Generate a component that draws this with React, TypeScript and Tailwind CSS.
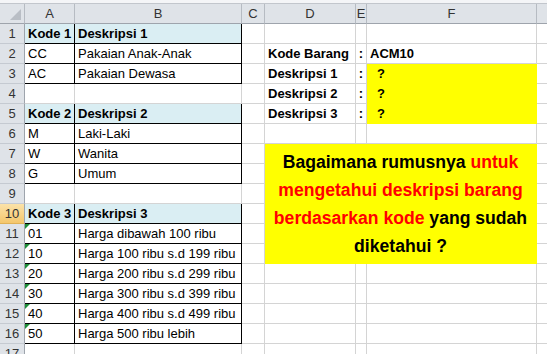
import type { ReactNode } from "react";

type TableKind = "head" | "body" | "blank";

type SheetRow = {
  n: number;
  kind: TableKind;
  a?: string;
  b?: string;
  textNumber?: boolean;
  label?: string;
  value?: string;
  ask?: boolean;
};

const rows: SheetRow[] = [
  { n: 1, kind: "head", a: "Kode 1", b: "Deskripsi 1" },
  { n: 2, kind: "body", a: "CC", b: "Pakaian Anak-Anak", label: "Kode Barang", value: "ACM10" },
  { n: 3, kind: "body", a: "AC", b: "Pakaian Dewasa", label: "Deskripsi 1", ask: true },
  { n: 4, kind: "blank", label: "Deskripsi 2", ask: true },
  { n: 5, kind: "head", a: "Kode 2", b: "Deskripsi 2", label: "Deskripsi 3", ask: true },
  { n: 6, kind: "body", a: "M", b: "Laki-Laki" },
  { n: 7, kind: "body", a: "W", b: "Wanita" },
  { n: 8, kind: "body", a: "G", b: "Umum" },
  { n: 9, kind: "blank" },
  { n: 10, kind: "head", a: "Kode 3", b: "Deskripsi 3" },
  { n: 11, kind: "body", a: "01", b: "Harga dibawah 100 ribu", textNumber: true },
  { n: 12, kind: "body", a: "10", b: "Harga 100 ribu s.d 199 ribu", textNumber: true },
  { n: 13, kind: "body", a: "20", b: "Harga 200 ribu s.d 299 ribu", textNumber: true },
  { n: 14, kind: "body", a: "30", b: "Harga 300 ribu s.d 399 ribu", textNumber: true },
  { n: 15, kind: "body", a: "40", b: "Harga 400 ribu s.d 499 ribu", textNumber: true },
  { n: 16, kind: "body", a: "50", b: "Harga 500 ribu lebih", textNumber: true },
  { n: 17, kind: "blank" },
];

// rows 7..12 of D:F sit under the merged question cell
const mergedFrom = 7;
const mergedTo = 12;

function Cell({ children, className = "" }: { children?: ReactNode; className?: string }) {
  return (
    <div
      className={
        "relative flex items-end overflow-hidden whitespace-nowrap border-r border-b px-[3px] pb-[1px] text-[13px] leading-[17px] text-black " +
        className
      }
    >
      {children}
    </div>
  );
}

function ColHeader({ label, className = "" }: { label: string; className?: string }) {
  return (
    <div
      className={
        "flex items-center justify-center border-r border-b border-r-[#b6bbc2] border-b-[#9ea4ac] bg-[#dfe3e8] text-[13px] text-[#333]" +
        " " +
        className
      }
    >
      {label}
    </div>
  );
}

function RowHeader({ n }: { n: number }) {
  return (
    <div
      className={
        n === 10
          ? "flex items-center justify-center border-r border-b border-r-[#9ea4ac] border-b-[#e0b257] bg-gradient-to-b from-[#fbe2a8] to-[#f4c76c] text-[13px] text-[#333]"
          : "flex items-center justify-center border-r border-b border-r-[#9ea4ac] border-b-[#c5cad1] bg-[#dfe3e8] text-[13px] text-[#333]"
      }
    >
      {n}
    </div>
  );
}

function TableCells({ row }: { row: SheetRow }) {
  const tone =
    row.kind === "head"
      ? "border-black bg-[#daeef3] font-bold"
      : row.kind === "body"
        ? "border-black bg-white"
        : "border-[#d4d4d4] bg-white";
  return (
    <>
      <Cell className={tone}>
        {row.textNumber ? (
          <span className="absolute left-0 top-0 h-0 w-0 border-r-[5px] border-t-[5px] border-r-transparent border-t-[#1f8f3a]" />
        ) : null}
        {row.a}
      </Cell>
      <Cell className={tone}>{row.b}</Cell>
    </>
  );
}

export default function App() {
  return (
    <div
      className="h-[354px] w-[547px] overflow-hidden bg-white"
      style={{ fontFamily: '"Liberation Sans", Arial, sans-serif' }}
    >
      <div className="grid grid-cols-[25px_50px_167px_23px_91px_11px_170px_10px] grid-rows-[4px_20px] auto-rows-[20px]">
        <div className="col-span-8 border-b border-[#c2c6cc] bg-[#f4f5f7]" />

        {/* column headers */}
        <div className="relative border-r border-b border-r-[#b6bbc2] border-b-[#9ea4ac] bg-[#dfe3e8]">
          <span className="absolute bottom-[3px] right-[3px] h-0 w-0 border-b-[11px] border-l-[11px] border-b-[#b9bec5] border-l-transparent" />
        </div>
        <ColHeader label="A" />
        <ColHeader label="B" />
        <ColHeader label="C" />
        <ColHeader label="D" />
        <ColHeader label="E" />
        <ColHeader label="F" />
        <ColHeader label="" className="border-r-0" />

        {rows.map((row) => {
          const underMerge = row.n >= mergedFrom && row.n <= mergedTo;
          return (
            <div className="contents" key={row.n}>
              <RowHeader n={row.n} />
              <TableCells row={row} />
              <Cell className="border-[#d4d4d4]" />
              {row.n === mergedFrom ? (
                <div className="col-span-3 row-span-6 flex flex-col items-center justify-center border-r border-b border-[#ffff00] bg-[#ffff00] text-center text-[17.6px] font-bold leading-[28px] text-black">
                  <p>
                    Bagaimana rumusnya <span className="text-[#ff0000]">untuk</span>
                  </p>
                  <p className="text-[#ff0000]">mengetahui deskripsi barang</p>
                  <p>
                    <span className="text-[#ff0000]">berdasarkan kode</span> yang sudah
                  </p>
                  <p>diketahui ?</p>
                </div>
              ) : underMerge ? null : (
                <>
                  <Cell className="border-[#d4d4d4] font-bold">{row.label}</Cell>
                  <Cell className="justify-center border-[#d4d4d4] px-0 font-bold">
                    {row.label ? ":" : null}
                  </Cell>
                  {row.ask ? (
                    <Cell className="border-[#ffff00] bg-[#ffff00] pl-[10px] font-bold">?</Cell>
                  ) : (
                    <Cell className="border-[#d4d4d4] font-bold">{row.value}</Cell>
                  )}
                </>
              )}
              <Cell className="border-r-0 border-[#d4d4d4]" />
            </div>
          );
        })}
      </div>
    </div>
  );
}
